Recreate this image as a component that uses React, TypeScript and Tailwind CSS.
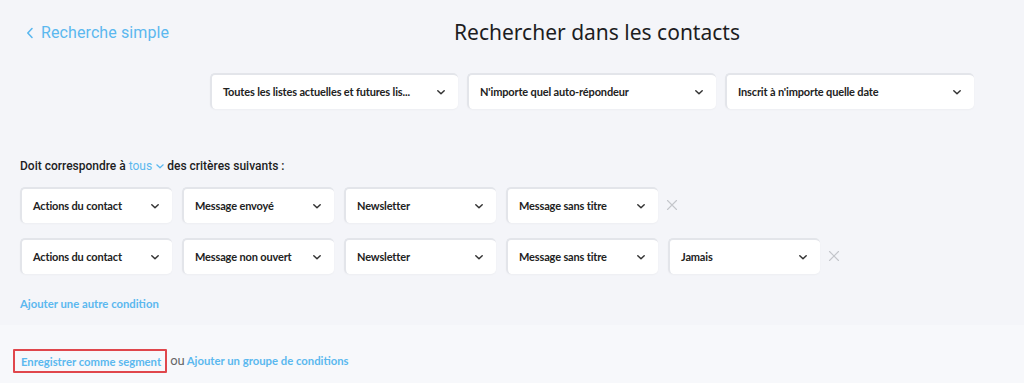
import React from "react";

const Chevron = () => (
  <svg width="10" height="7" viewBox="0 0 10 7" fill="none" className="shrink-0">
    <path d="M1.8 1.8L5 4.8L8.2 1.8" stroke="#333" strokeWidth="1.5" strokeLinecap="round" strokeLinejoin="round" />
  </svg>
);

const Close = () => (
  <svg width="12" height="12" viewBox="0 0 12 12" fill="none">
    <path d="M1.5 1.5L10.5 10.5M10.5 1.5L1.5 10.5" stroke="#c4c6cb" strokeWidth="1.1" strokeLinecap="round" />
  </svg>
);

function Select({ label, w }: { label: string; w: string }) {
  return (
    <div
      className={`${w} h-[36px] shrink-0 bg-white rounded-[5px] border-t-2 border-l-2 border-[#e3e5ea] flex items-center justify-between pl-[11px] pr-[12px] shadow-[0_1px_2px_rgba(0,0,0,0.03)]`}
    >
      <span
        className="text-[11px] tracking-[-0.15px] font-bold text-[#222] whitespace-nowrap"
        style={{ fontFamily: "Lato, sans-serif" }}
      >
        {label}
      </span>
      <Chevron />
    </div>
  );
}

export default function App() {
  return (
    <div
      className="w-[1024px] h-[383px] overflow-hidden bg-[#f4f5f9] flex flex-col"
      style={{ fontFamily: "Lato, 'Noto Sans', sans-serif" }}
    >
      <div className="h-[325px] flex flex-col">
        <div className="flex items-center h-[64px] pt-[1px]">
          <div className="w-[210px] pl-[26px] flex items-center gap-[7px] text-[#5bb8ef]">
            <svg width="8" height="12" viewBox="0 0 8 12" fill="none">
              <path d="M6 1.5L1.8 6L6 10.5" stroke="#5bb8ef" strokeWidth="1.6" strokeLinecap="round" strokeLinejoin="round" />
            </svg>
            <span className="text-[16px] tracking-[0.1px]" style={{ fontFamily: "Roboto, sans-serif" }}>
              Recherche simple
            </span>
          </div>
          <div className="flex-1 flex justify-center pr-[40px]">
            <h1 className="text-[21px] text-[#1d1d1f] font-normal" style={{ fontFamily: "'Noto Sans', sans-serif" }}>
              Rechercher dans les contacts
            </h1>
          </div>
        </div>
        <div className="flex gap-[9px] pl-[210px] mt-[9px]">
          <Select label="Toutes les listes actuelles et futures lis..." w="w-[248px]" />
          <Select label="N'importe quel auto-répondeur" w="w-[249px]" />
          <Select label="Inscrit à n'importe quelle date" w="w-[249px]" />
        </div>
        <div
          className="pl-[20px] mt-[48px] text-[12px] font-medium text-[#1d1d1f] flex items-center"
          style={{ fontFamily: "Roboto, sans-serif" }}
        >
          <span>Doit correspondre à&nbsp;</span>
          <span className="text-[#5bb8ef] font-normal">tous</span>
          <svg width="10" height="7" viewBox="0 0 10 7" fill="none" className="ml-[3px] mr-[2px]">
            <path d="M1.8 1.8L5 4.8L8.2 1.8" stroke="#5bb8ef" strokeWidth="1.2" strokeLinecap="round" strokeLinejoin="round" />
          </svg>
          <span>des critères suivants :</span>
        </div>
        <div className="pl-[20px] mt-[12px] flex flex-col gap-[15px]">
          <div className="flex items-center gap-[10px]">
            <Select label="Actions du contact" w="w-[152px]" />
            <Select label="Message envoyé" w="w-[152px]" />
            <Select label="Newsletter" w="w-[152px]" />
            <Select label="Message sans titre" w="w-[152px]" />
            <div className="-ml-[2px]"><Close /></div>
          </div>
          <div className="flex items-center gap-[10px]">
            <Select label="Actions du contact" w="w-[152px]" />
            <Select label="Message non ouvert" w="w-[152px]" />
            <Select label="Newsletter" w="w-[152px]" />
            <Select label="Message sans titre" w="w-[152px]" />
            <Select label="Jamais" w="w-[152px]" />
            <div className="-ml-[2px]"><Close /></div>
          </div>
        </div>
        <div className="pl-[20px] mt-[22px] text-[11.3px] font-bold text-[#5bb8ef]">Ajouter une autre condition</div>
      </div>
      <div className="flex-1 bg-[#f7f8fb] pl-[13px] pt-[24px]">
        <div className="flex items-center text-[11.3px] font-bold">
          <span className="border-2 border-[#e0474c] pl-[6px] pr-[4px] pt-[3px] pb-[2px] text-[#5bb8ef] rounded-[1px] leading-[15px]">
            Enregistrer comme segment
          </span>
          <span className="ml-[3px] text-[#666] font-normal text-[13px]" style={{ fontFamily: "Roboto, sans-serif" }}>
            ou
          </span>
          <span className="ml-[2px] text-[#5bb8ef]">Ajouter un groupe de conditions</span>
        </div>
      </div>
    </div>
  );
}
